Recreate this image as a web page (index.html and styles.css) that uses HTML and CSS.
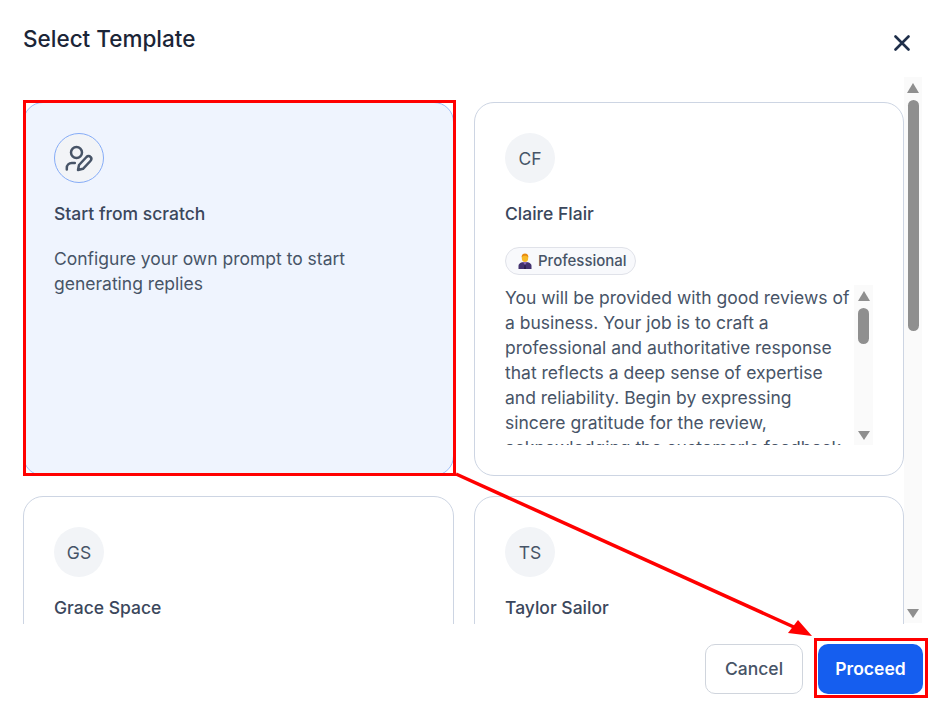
FILE: index.html
```html
<!DOCTYPE html>
<html lang="en">
<head>
    <meta charset="UTF-8">
    <meta name="viewport" content="width=device-width, initial-scale=1.0">
    <title>Select Template</title>
    <link rel="stylesheet" href="styles.css">
</head>
<body>

    <div class="modal">
        <!-- Header -->
        <header class="modal-header">
            <h2>Select Template</h2>
            <button class="close-btn" aria-label="Close">
                <svg width="16" height="16" viewBox="0 0 16 16"><path d="M1.500 1.500l13 13M14.500 1.500l-13 13" fill="none" stroke="#1f2f4a" stroke-width="2.600" stroke-linecap="round"/></svg>
            </button>
        </header>

        <!-- Template list -->
        <div class="modal-body">
            <div class="template-grid">
                <div class="card card-selected">
                    <div class="avatar avatar-icon">
                        <svg width="28" height="28" viewBox="0 0 28 28" fill="none" stroke="#475467" stroke-width="2.500" stroke-linecap="round" stroke-linejoin="round">
                            <circle cx="11.500" cy="8.500" r="5.500"/>
                            <path d="M1.800 25.500V24c0-3 2.200-5 5-5h3"/>
                            <path d="M13 26l1-5 7.500-8c1.200-1.200 3-1.200 4 0 1 1 1 2.800-.1 4L18 24.800z"/>
                        </svg>
                    </div>
                    <h3>Start from scratch</h3>
                    <p class="desc">Configure your own prompt to start generating replies</p>
                </div>

                <div class="card">
                    <div class="avatar">CF</div>
                    <h3>Claire Flair</h3>
                    <span class="tag">
                        <svg width="14" height="16" viewBox="0 0 14 16">
                            <path d="M0.500 16v-3c0-2.500 2.500-4 6.500-4s6.500 1.500 6.500 4v3z" fill="#43326f"/>
                            <path d="M5 9l2 3.500L9 9z" fill="#8a68b8"/>
                            <path d="M6.500 11.500h1L8 16H6z" fill="#271c48"/>
                            <ellipse cx="7" cy="5" rx="3.200" ry="4" fill="#f7b928"/>
                            <path d="M3.600 4.500C3.500 1.800 5 .5 7 .5s3.500 1.300 3.400 4c-.8-1.300-1.800-1.800-3.400-1.800S4.400 3.200 3.600 4.500z" fill="#e8890f"/>
                        </svg>
                        Professional
                    </span>
                    <div class="prompt">
                        <p class="prompt-text">You will be provided with good reviews of a business. Your job is to craft a professional and authoritative response that reflects a deep sense of expertise and reliability. Begin by expressing sincere gratitude for the review, acknowledging the customer's feedback</p>
                        <div class="scrollbar scrollbar-inner">
                            <span class="arrow-up"></span>
                            <span class="thumb"></span>
                            <span class="arrow-down"></span>
                        </div>
                    </div>
                </div>

                <div class="card">
                    <div class="avatar">GS</div>
                    <h3>Grace Space</h3>
                </div>

                <div class="card">
                    <div class="avatar">TS</div>
                    <h3>Taylor Sailor</h3>
                </div>
            </div>

            <div class="scrollbar scrollbar-outer">
                <span class="arrow-up"></span>
                <span class="thumb"></span>
                <span class="arrow-down"></span>
            </div>
        </div>

        <!-- Footer -->
        <footer class="modal-footer">
            <button class="btn btn-cancel">Cancel</button>
            <button class="btn btn-proceed">Proceed</button>
        </footer>
    </div>

    <!-- Red annotations drawn over the screenshot -->
    <div class="mark mark-card"></div>
    <div class="mark mark-btn"></div>
    <svg class="mark-arrow" width="941" height="710" viewBox="0 0 941 710">
        <path d="M456 474L796 628" fill="none" stroke="#ff0000" stroke-width="3.500"/>
        <path d="M812 636L788 633L798 620z" fill="#ff0000"/>
    </svg>

</body>
</html>
```

FILE: styles.css
```css
* {
    margin: 0;
    padding: 0;
    box-sizing: border-box;
}

html, body {
    height: 100%;
}

body {
    font-family: Inter, "Noto Sans", sans-serif;
    background-color: #fff;
    color: #344054;
    overflow: hidden;
}

.modal {
    width: 941px;
    height: 710px;
    display: flex;
    flex-direction: column;
}

/* Header */
.modal-header {
    height: 77px;
    flex: none;
    display: flex;
    justify-content: space-between;
    align-items: flex-start;
    padding: 25px 31px 0 23px;
}

.modal-header h2 {
    font-size: 22.500px;
    line-height: 28px;
    font-weight: 500;
    color: #1b2537;
}

.close-btn {
    background: none;
    border: none;
    margin-top: 10px;
    height: 16px;
}

/* Body */
.modal-body {
    height: 547px;
    flex: none;
    display: flex;
    overflow: hidden;
    padding-left: 23px;
}

.template-grid {
    width: 881px;
    padding-top: 25px;
    display: grid;
    grid-template-columns: 431px 430px;
    grid-auto-rows: 374px;
    gap: 20px;
}

.card {
    border: 1px solid #cdd5e3;
    border-radius: 20px;
    padding: 30px;
    background-color: #fff;
}

.card-selected {
    background-color: #eff4fe;
    border-color: #9dbcf7;
}

.avatar {
    width: 50px;
    height: 50px;
    border-radius: 50%;
    background-color: #f2f4f7;
    color: #475467;
    font-size: 17.500px;
    display: flex;
    align-items: center;
    justify-content: center;
}

.avatar-icon {
    border: 1px solid #86acf7;
}

.card h3 {
    font-size: 17.500px;
    line-height: 25px;
    font-weight: 450;
    margin-top: 18px;
    color: #3b475c;
}

.desc {
    font-size: 17.500px;
    line-height: 25px;
    margin-top: 20px;
    color: #475467;
}

.tag {
    display: flex;
    width: 131px;
    align-items: center;
    gap: 6px;
    height: 28px;
    margin-top: 21px;
    padding-left: 12px;
    padding-bottom: 1px;
    border: 1px solid #e0e2e9;
    border-radius: 14px;
    background-color: #f8f9fc;
    font-size: 15px;
    font-weight: 450;
    color: #475467;
    white-space: nowrap;
}

.prompt {
    display: flex;
    height: 160px;
    width: 368px;
    margin-top: 10px;
    overflow: hidden;
}

.prompt-text {
    width: 349px;
    flex: none;
    font-size: 17.500px;
    line-height: 25px;
    color: #475467;
}

/* Scrollbars */
.scrollbar {
    flex: none;
    display: flex;
    flex-direction: column;
    align-items: center;
    background-color: #fafafa;
}

.scrollbar-outer {
    width: 18px;
    height: 546px;
}

.scrollbar-inner {
    width: 19px;
    height: 160px;
}

.thumb {
    width: 11px;
    border-radius: 6px;
    background-color: #8f8f8f;
}

.scrollbar-outer .thumb {
    height: 231px;
    margin-top: 7px;
}

.scrollbar-inner .thumb {
    height: 36px;
    margin-top: 7px;
}

.arrow-up, .arrow-down {
    width: 0;
    height: 0;
    border-left: 6.500px solid transparent;
    border-right: 6.500px solid transparent;
}

.arrow-up {
    margin-top: 6px;
    border-bottom: 10px solid #8f8f8f;
}

.arrow-down {
    margin-top: auto;
    margin-bottom: 5px;
    border-top: 9px solid #8f8f8f;
}

/* Footer */
.modal-footer {
    flex: 1;
    display: flex;
    justify-content: flex-end;
    align-items: flex-start;
    gap: 15px;
    padding: 20px 18px 0 0;
}

.btn {
    height: 50px;
    padding-bottom: 2px;
    border-radius: 10px;
    font-family: inherit;
    font-size: 17.500px;
    font-weight: 500;
}

.btn-cancel {
    width: 98px;
    background-color: #fff;
    border: 1px solid #d0d5dd;
    color: #475467;
}

.btn-proceed {
    width: 105px;
    background-color: #155eef;
    border: none;
    color: #fff;
    font-weight: 600;
}

/* Annotations */
.mark {
    position: absolute;
    border: 3px solid #ff0000;
}

.mark-card {
    left: 23px;
    top: 100px;
    width: 433px;
    height: 376px;
}

.mark-btn {
    left: 814px;
    top: 638px;
    width: 114px;
    height: 60px;
}

.mark-arrow {
    position: absolute;
    left: 0;
    top: 0;
    pointer-events: none;
}
```
